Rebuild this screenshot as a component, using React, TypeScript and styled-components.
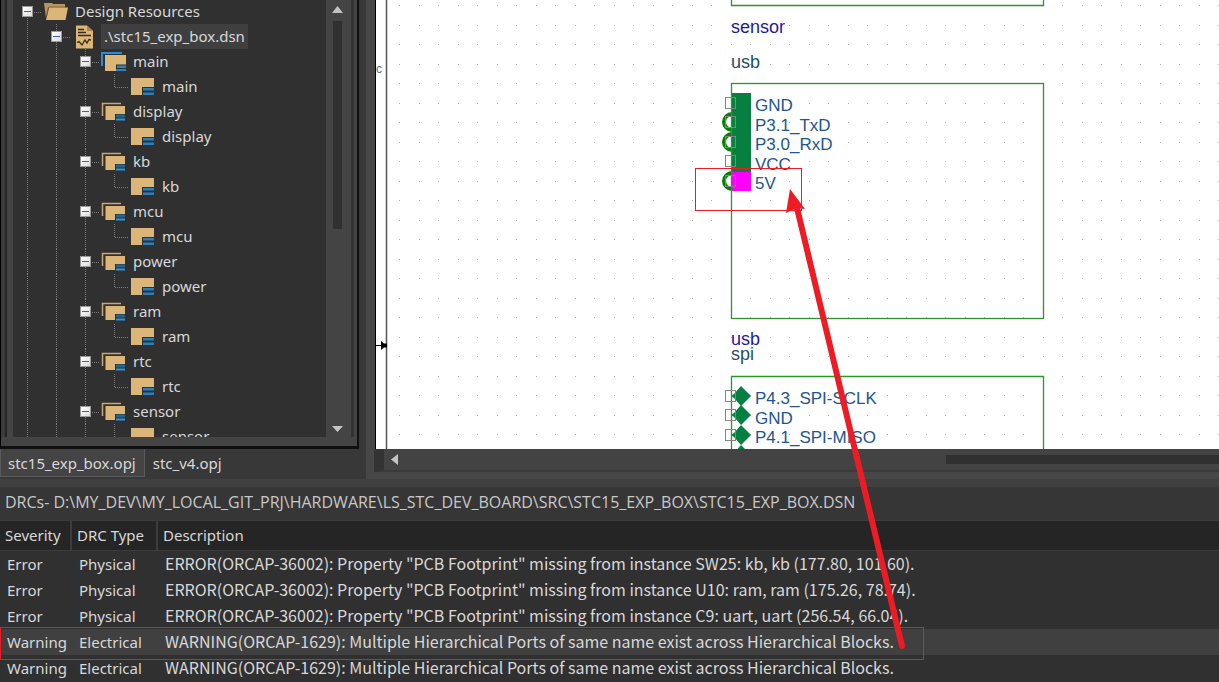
import React from "react";
import styled, { createGlobalStyle } from "styled-components";

const ui = '"Noto Sans", "Open Sans", sans-serif';
const TAN = "#dcb579";

const GlobalStyle = createGlobalStyle`
  * { box-sizing: border-box; }
  body { margin: 0; background: #303030; }
  button, table { font: inherit; color: inherit; }
`;

const Page = styled.div`
  position: relative;
  display: flex;
  flex-direction: column;
  height: 100vh;
  overflow: hidden;
  background: #383838;
  color: #d8d8d8;
  font-family: ${ui};
  font-size: 15px;
  line-height: 24px;
`;

const Workspace = styled.div`
  display: flex;
  flex: 1;
  min-height: 0;
`;

const Sidebar = styled.aside`
  display: flex;
  flex-direction: column;
  width: 366px;
  flex: none;
`;

const TreeFrame = styled.div`
  display: flex;
  flex: 1;
  min-height: 0;
  margin-right: 7px;
  padding-bottom: 9px;
  background: #444;
  border-left: 1px solid #000;
  border-right: 2px solid #101010;
  border-bottom: 3px solid #101010;
`;

const Rail = styled.div`
  width: 12px;
  border-left: 4px solid #3c3c3c;
  background: linear-gradient(to right, #262626 2px, #444 2px);
`;

const Tree = styled.ul`
  flex: 1;
  margin: 0;
  padding: 0;
  overflow: hidden;
  background: #303030;
  list-style: none;
`;

const TreeRow = styled.li`
  display: flex;
  height: 25px;
  &:first-child { margin-top: -1px; }
`;

const Cell = styled.span`
  display: grid;
  width: 29px;
  height: 25px;
  flex: none;
  > * { grid-area: 1 / 1; }
`;

const Toggle = styled.button`
  display: grid;
  place-items: center;
  place-self: center;
  width: 11px;
  height: 11px;
  padding: 0;
  border: 1px solid #9a9a9a;
  background: linear-gradient(135deg, #fff, #dcdcdc);
  &::before {
    content: "";
    width: 7px;
    height: 1px;
    background: #4560b0;
  }
`;

const NodeIcon = styled.svg`
  width: 29px;
  height: 25px;
  margin-left: 1px;
  flex: none;
`;

const NodeLabel = styled.span<{ $selected?: boolean }>`
  padding: 0 3px;
  background: ${(p) => (p.$selected ? "#3f3f3f" : "transparent")};
`;

const VScroll = styled.div`
  display: flex;
  flex-direction: column;
  align-items: center;
  width: 22px;
  padding-top: 6px;
`;

const VThumb = styled.div`
  width: 9px;
  height: 208px;
  margin: 8px 0 auto;
  background: #303030;
`;

const Arrow = styled.svg`
  fill: #c4c4c4;
  flex: none;
`;

const Edge = styled.div`
  width: 6px;
  margin-left: 3px;
  border-left: 3px solid #333;
`;

const Tabs = styled.nav`
  display: flex;
  height: 30px;
  padding-bottom: 2px;
`;

const Tab = styled.button<{ $active?: boolean }>`
  padding: 0 8px 0 7px;
  border: 1px solid ${(p) => (p.$active ? "#5a5a5a" : "transparent")};
  border-top: 0;
  background: ${(p) => (p.$active ? "#444" : "transparent")};
`;

const Editor = styled.main`
  display: flex;
  flex: 1;
  min-width: 0;
  flex-direction: column;
  padding: 0 0 7px 9px;
  background: #474747;
`;

const Canvas = styled.svg`
  flex: 1;
  min-height: 0;
  width: 100%;
  background: #fff;
  border-left: 1px solid #000;
  font-family: "Liberation Sans", Arial, sans-serif;
`;

const HScroll = styled.div`
  display: flex;
  align-items: center;
  height: 23px;
  padding-left: 7px;
  background: #434343;
  border-left: 10px solid #333;
  border-bottom: 2px solid #3a3a3a;
  margin-left: -1px;
`;

const HThumb = styled.div`
  width: 33%;
  height: 9px;
  margin-left: auto;
  background: #303030;
`;

const Drc = styled.section`
  flex: none;
  padding-bottom: 1px;
  border-top: 8px solid #404040;
  background: #303030;
`;

const DrcTitle = styled.h2`
  margin: 0;
  padding: 0 5px 2px;
  font-family: "Open Sans", "Noto Sans", sans-serif;
  font-size: 16px;
  font-weight: 400;
  line-height: 31px;
  background: #363636;
  color: #c8c8c8;
`;

const Table = styled.table`
  width: 100%;
  table-layout: fixed;
  border-collapse: separate;
  border-spacing: 0;
  white-space: nowrap;
`;

const Th = styled.th<{ $w?: number }>`
  width: ${(p) => (p.$w ? p.$w + "px" : "auto")};
  height: 31px;
  padding: 0 0 2px 5px;
  background: #252525;
  border: 0 solid #3c3c3c;
  border-width: 1px 2px 1px 0;
  font-weight: 400;
  text-align: left;
  &:last-child { border-right-width: 0; }
`;

const Tr = styled.tr<{ $selected?: boolean }>`
  background: ${(p) => (p.$selected ? "#404040" : "transparent")};
`;

const Td = styled.td`
  height: 26px;
  padding: 0 0 0 7px;
  vertical-align: baseline;
  &:last-child {
    font-family: "Noto Sans CJK SC", sans-serif;
    font-size: 16px;
  }
`;

const Annotations = styled.svg`
  position: absolute;
  inset: 0;
  width: 100%;
  height: 100%;
  pointer-events: none;
`;

type Guide = "line" | "root" | "branch" | "elbow";

const guidePath: Record<Guide, string> = {
  line: "M14.5 0V25",
  root: "M14.5 19V25M21 13.5H29",
  branch: "M14.5 0V25M21 13.5H29",
  elbow: "M14.5 0V13.5H29",
};

function GuideCell({ kind, name }: { kind: Guide; name?: string }) {
  return (
    <Cell>
      <svg width="29" height="25" aria-hidden="true">
        <path d={guidePath[kind]} fill="none" stroke="#7c7c7c" strokeDasharray="1 1" />
      </svg>
      {name && <Toggle aria-label={"Collapse " + name} />}
    </Cell>
  );
}

type IconKind = "open" | "design" | "root" | "folder" | "page";

function Icon({ kind }: { kind: IconKind }) {
  return (
    <NodeIcon viewBox="0 0 29 25" aria-hidden="true">
      {kind === "open" && (
        <>
          <path d="M1 4H9L10 5H22V9H5L3 19Z" fill="#b89662" />
          <path d="M6 8.500H25L22.500 21H3Z" fill={TAN} />
          <path d="M3.500 18L5.500 8H23" fill="none" stroke="#6f5833" strokeWidth="0.800" />
        </>
      )}
      {kind === "design" && (
        <>
          <path d="M4 1.500H15L21 7V24.500H4Z" fill={TAN} />
          <path d="M15 1.500V7H21Z" fill="#a98552" />
          <path d="M6 5.500H12M6 8.500H14M6 11.500H19" fill="none" stroke="#3a2c18" strokeWidth="1.300" />
          <path d="M5 18.500L7 17.500L10 21L13 16L15 19L17 15.500L19 16" fill="none" stroke="#3a2c18" strokeWidth="1.300" />
        </>
      )}
      {kind === "root" && (
        <>
          <path d="M1 17V4H21" fill="none" stroke="#2190dc" strokeWidth="2" />
          <path d="M4 6H25V15.500H15V22H4Z" fill={TAN} />
          <path d="M16 16.500H25V19H16ZM15 20H25V22H15Z" fill="#2486c8" />
        </>
      )}
      {kind === "folder" && (
        <>
          <path d="M1.500 17V4.500H20" fill="none" stroke="#c9a772" strokeWidth="1.500" />
          <path d="M4.500 7H24V15H14V21H4.500Z" fill={TAN} />
          <path d="M15 15.500H24V18.500H15Z" fill="#25648c" />
          <path d="M15 19.500H24V21.500H15Z" fill="#2a94dc" />
        </>
      )}
      {kind === "page" && (
        <>
          <path d="M1 4H24V13H12V21H1Z" fill={TAN} />
          <path d="M13 14H24V16.500H13ZM13 18.500H24V21H13Z" fill="#2480bf" />
        </>
      )}
    </NodeIcon>
  );
}

type TreeItem = { label: string; guides: Guide[]; icon: IconKind; selected?: boolean };

const folders = ["main", "display", "kb", "mcu", "power", "ram", "rtc", "sensor"];

const items: TreeItem[] = [
  { label: "Design Resources", guides: ["root"], icon: "open" },
  { label: ".\\stc15_exp_box.dsn", guides: ["line", "branch"], icon: "design", selected: true },
  ...folders.flatMap((label): TreeItem[] => [
    { label, guides: ["line", "line", "branch"], icon: label === "main" ? "root" : "folder" },
    { label, guides: ["line", "line", "line", "elbow"], icon: "page" },
  ]),
];

const rows = [
  ["Error", "Physical", 'ERROR(ORCAP-36002): Property "PCB Footprint" missing from instance SW25: kb, kb (177.80, 101.60).'],
  ["Error", "Physical", 'ERROR(ORCAP-36002): Property "PCB Footprint" missing from instance U10: ram, ram (175.26, 78.74).'],
  ["Error", "Physical", 'ERROR(ORCAP-36002): Property "PCB Footprint" missing from instance C9: uart, uart (256.54, 66.04).'],
  ["Warning", "Electrical", "WARNING(ORCAP-1629): Multiple Hierarchical Ports of same name exist across Hierarchical Blocks."],
  ["Warning", "Electrical", "WARNING(ORCAP-1629): Multiple Hierarchical Ports of same name exist across Hierarchical Blocks."],
];

const usbPins = [
  { name: "GND", y: 103, base: 111 },
  { name: "P3.1_TxD", y: 122, base: 131, net: true },
  { name: "P3.0_RxD", y: 142, base: 150, net: true },
  { name: "VCC", y: 161, base: 170 },
  { name: "5V", y: 181, base: 189, net: true },
];

const spiPins = [
  { name: "P4.3_SPI-SCLK", y: 396, base: 404 },
  { name: "GND", y: 415, base: 424 },
  { name: "P4.1_SPI-MISO", y: 435, base: 443 },
  { name: "", y: 455, base: 463 },
];

function Schematic() {
  return (
    <Canvas role="img" aria-label="Schematic page">
      <defs>
        <pattern id="grid" x="23" y="5" width="39" height="39" patternUnits="userSpaceOnUse">
          <path d="M0 0h1v1h-1zM20 0h1v1h-1zM0 20h1v1h-1zM20 20h1v1h-1z" fill="#b0b0b0" />
        </pattern>
      </defs>
      <rect x="12" width="100%" height="100%" fill="url(#grid)" />
      <path d="M10.500 0V1000" stroke="#555" strokeWidth="1.500" />
      <text x="0" y="73" fontSize="12" fill="#667">c</text>
      <path d="M0 345.500H6" stroke="#000" />
      <path d="M5 341L8 343.500H11V347.500H8L5 350Z" />
      <g transform="translate(-376 0)">
        {usbPins.map((p) =>
          p.net ? (
            <path key={p.name} d={`M732 ${p.y - 8}A8 8 0 0 0 732 ${p.y + 8}`} fill="#fff" stroke="#087d08" strokeWidth="4" />
          ) : null
        )}
        <rect x="732" y="93" width="19" height="79" fill="#058040" />
        <rect x="732" y="172" width="19" height="19" fill="#f0f" />
        {spiPins.map((p) => (
          <path key={p.y} d={`M731 ${p.y}L734 ${p.y - 2}L741 ${p.y - 10}L751 ${p.y}L741 ${p.y + 10}L734 ${p.y + 2}Z`} fill="#058040" />
        ))}
        <g fill="none" stroke="#2c952c" strokeWidth="1.300">
          <path d="M731.500 -10V5.500H1043.500V-10" />
          <rect x="731.500" y="83.500" width="312" height="235" />
          <path d="M731.500 460V376.500H1043.500V460" />
        </g>
        <g fontSize="18">
          <text x="731" y="33" fill="#1f1a96">sensor</text>
          <text x="731" y="68" fill="#1d5060">usb</text>
          <text x="731" y="345" fill="#1f1a96">usb</text>
          <text x="731" y="360" fill="#1d5060">spi</text>
        </g>
        {[...usbPins, ...spiPins].map((p) => (
          <g key={p.y}>
            <rect x="725.500" y={p.y - 5.5} width="10" height="11" fill="none" stroke="#858585" />
            <text x="755" y={p.base} fontSize="17" fill="#22558f">{p.name}</text>
          </g>
        ))}
      </g>
    </Canvas>
  );
}

export default function App() {
  return (
    <Page>
      <GlobalStyle />
      <Workspace>
        <Sidebar>
          <TreeFrame>
            <Rail />
            <Tree>
              {items.map((item, i) => (
                <TreeRow key={i}>
                  {item.guides.map((g, j) => (
                    <GuideCell key={j} kind={g} name={g === "root" || g === "branch" ? item.label : undefined} />
                  ))}
                  <Icon kind={item.icon} />
                  <NodeLabel $selected={item.selected}>{item.label}</NodeLabel>
                </TreeRow>
              ))}
            </Tree>
            <VScroll>
              <Arrow width="11" height="7"><path d="M0 7L5.500 0L11 7Z" /></Arrow>
              <VThumb />
              <Arrow width="11" height="11"><path d="M0 0H11L5.500 6Z" /></Arrow>
            </VScroll>
            <Edge />
          </TreeFrame>
          <Tabs>
            <Tab $active>stc15_exp_box.opj</Tab>
            <Tab>stc_v4.opj</Tab>
          </Tabs>
        </Sidebar>
        <Editor>
          <Schematic />
          <HScroll>
            <Arrow width="7" height="11"><path d="M0 5.500L7 0V11Z" /></Arrow>
            <HThumb />
          </HScroll>
        </Editor>
      </Workspace>
      <Drc>
        <DrcTitle>DRCs- D:\MY_DEV\MY_LOCAL_GIT_PRJ\HARDWARE\LS_STC_DEV_BOARD\SRC\STC15_EXP_BOX\STC15_EXP_BOX.DSN</DrcTitle>
        <Table>
          <thead>
            <tr>
              <Th $w={72}>Severity</Th>
              <Th $w={86}>DRC Type</Th>
              <Th>Description</Th>
            </tr>
          </thead>
          <tbody>
            {rows.map((r, i) => (
              <Tr key={i} $selected={i === 3}>
                {r.map((c) => (
                  <Td key={c}>{c}</Td>
                ))}
              </Tr>
            ))}
          </tbody>
        </Table>
      </Drc>
      <Annotations aria-hidden="true">
        <g fill="none" stroke="#ed1c24">
          <rect x="695.500" y="168.500" width="106" height="42" />
          <rect x="0.500" y="627.500" width="923" height="32" />
          <path d="M797 208L902 646" strokeWidth="6" strokeLinecap="round" />
        </g>
        <path d="M790 189L805 209L797 208L786 213Z" fill="#ed1c24" />
      </Annotations>
    </Page>
  );
}
